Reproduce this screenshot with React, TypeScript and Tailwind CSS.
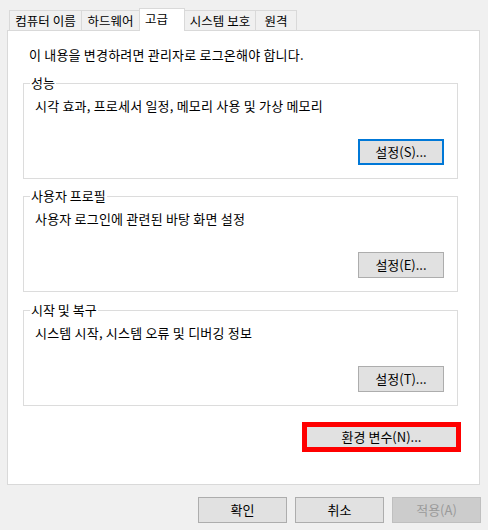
import React from "react";

function Tab({ label, w, selected, noLeft, last }: { label: string; w: string; selected?: boolean; noLeft?: boolean; last?: boolean }) {
  if (selected) {
    return (
      <div className={`relative z-10 -mb-px flex h-[23px] ${w} items-start border-x border-t border-[#d9d9d9] bg-white pl-[5px] pt-[2px] text-[12.5px] leading-[16px]`}>
        {label}
      </div>
    );
  }
  return (
    <div
      className={`flex h-[20px] ${w} items-center justify-center border-t border-[#d9d9d9] bg-[#f0f0f0] text-[12.5px] leading-[16px] ${noLeft ? "" : "border-l"} ${last ? "border-r" : ""}`}
    >
      {label}
    </div>
  );
}

function Btn({ label, focused, disabled, w = "w-[86px]" }: { label: string; focused?: boolean; disabled?: boolean; w?: string }) {
  const cls = disabled
    ? "border border-[#bfbfbf] bg-[#cccccc] text-[#9a9a9a]"
    : focused
    ? "border-2 border-[#0078d7] bg-[#e1e1e1]"
    : "border border-[#adadad] bg-[#e1e1e1]";
  return (
    <div className={`flex h-[26px] ${w} items-center justify-center leading-[16px] ${cls}`}>{label}</div>
  );
}

function Group({ title, desc, btn, focused, mt }: { title: string; desc: string; btn: string; focused?: boolean; mt: string }) {
  return (
    <div className={`relative ml-[15px] ${mt} flex h-[96px] w-[435px] flex-col border border-[#dcdcdc]`}>
      <span className="absolute left-[6px] top-[-9px] bg-white px-[1px] leading-[16px]">{title}</span>
      <div className="pl-[11px] pt-[14px] leading-[16px] tracking-[0.2px]">{desc}</div>
      <div className="mr-[13px] mt-[25px] flex justify-end">
        <Btn label={btn} focused={focused} />
      </div>
    </div>
  );
}

export default function App() {
  return (
    <div className="h-[530px] w-[488px] bg-[#f0f0f0] font-['Noto_Sans_CJK_KR',sans-serif] text-[13px] text-black">
      <div className="flex h-[30px] items-end pl-[9px]">
        <Tab label="컴퓨터 이름" w="w-[72px]" />
        <Tab label="하드웨어" w="w-[58px]" />
        <Tab label="고급" w="w-[46px]" selected />
        <Tab label="시스템 보호" w="w-[70px]" noLeft />
        <Tab label="원격" w="w-[42px]" last />
      </div>
      <div className="ml-[7px] flex h-[455px] w-[473px] flex-col border border-[#d9d9d9] bg-white">
        <div className="ml-[21px] mt-[16px] leading-[16px] tracking-[0.2px]">이 내용을 변경하려면 관리자로 로그온해야 합니다.</div>
        <Group mt="mt-[20px]" title="성능" desc="시각 효과, 프로세서 일정, 메모리 사용 및 가상 메모리" btn="설정(S)..." focused />
        <Group mt="mt-[17px]" title="사용자 프로필" desc="사용자 로그인에 관련된 바탕 화면 설정" btn="설정(E)..." />
        <Group mt="mt-[18px]" title="시작 및 복구" desc="시스템 시작, 시스템 오류 및 디버깅 정보" btn="설정(T)..." />
        <div className="mr-[18px] mt-[16px] flex justify-end">
          <div className="flex h-[30px] w-[159px] items-center justify-center border-[5px] border-[#ff0000] bg-[#e1e1e1] leading-[16px]">
            환경 변수(N)...
          </div>
        </div>
      </div>
      <div className="mt-[12px] flex justify-end gap-[8px] pr-[7px]">
        <Btn label="확인" w="w-[89px]" />
        <Btn label="취소" w="w-[89px]" />
        <Btn label="적용(A)" w="w-[89px]" disabled />
      </div>
    </div>
  );
}
